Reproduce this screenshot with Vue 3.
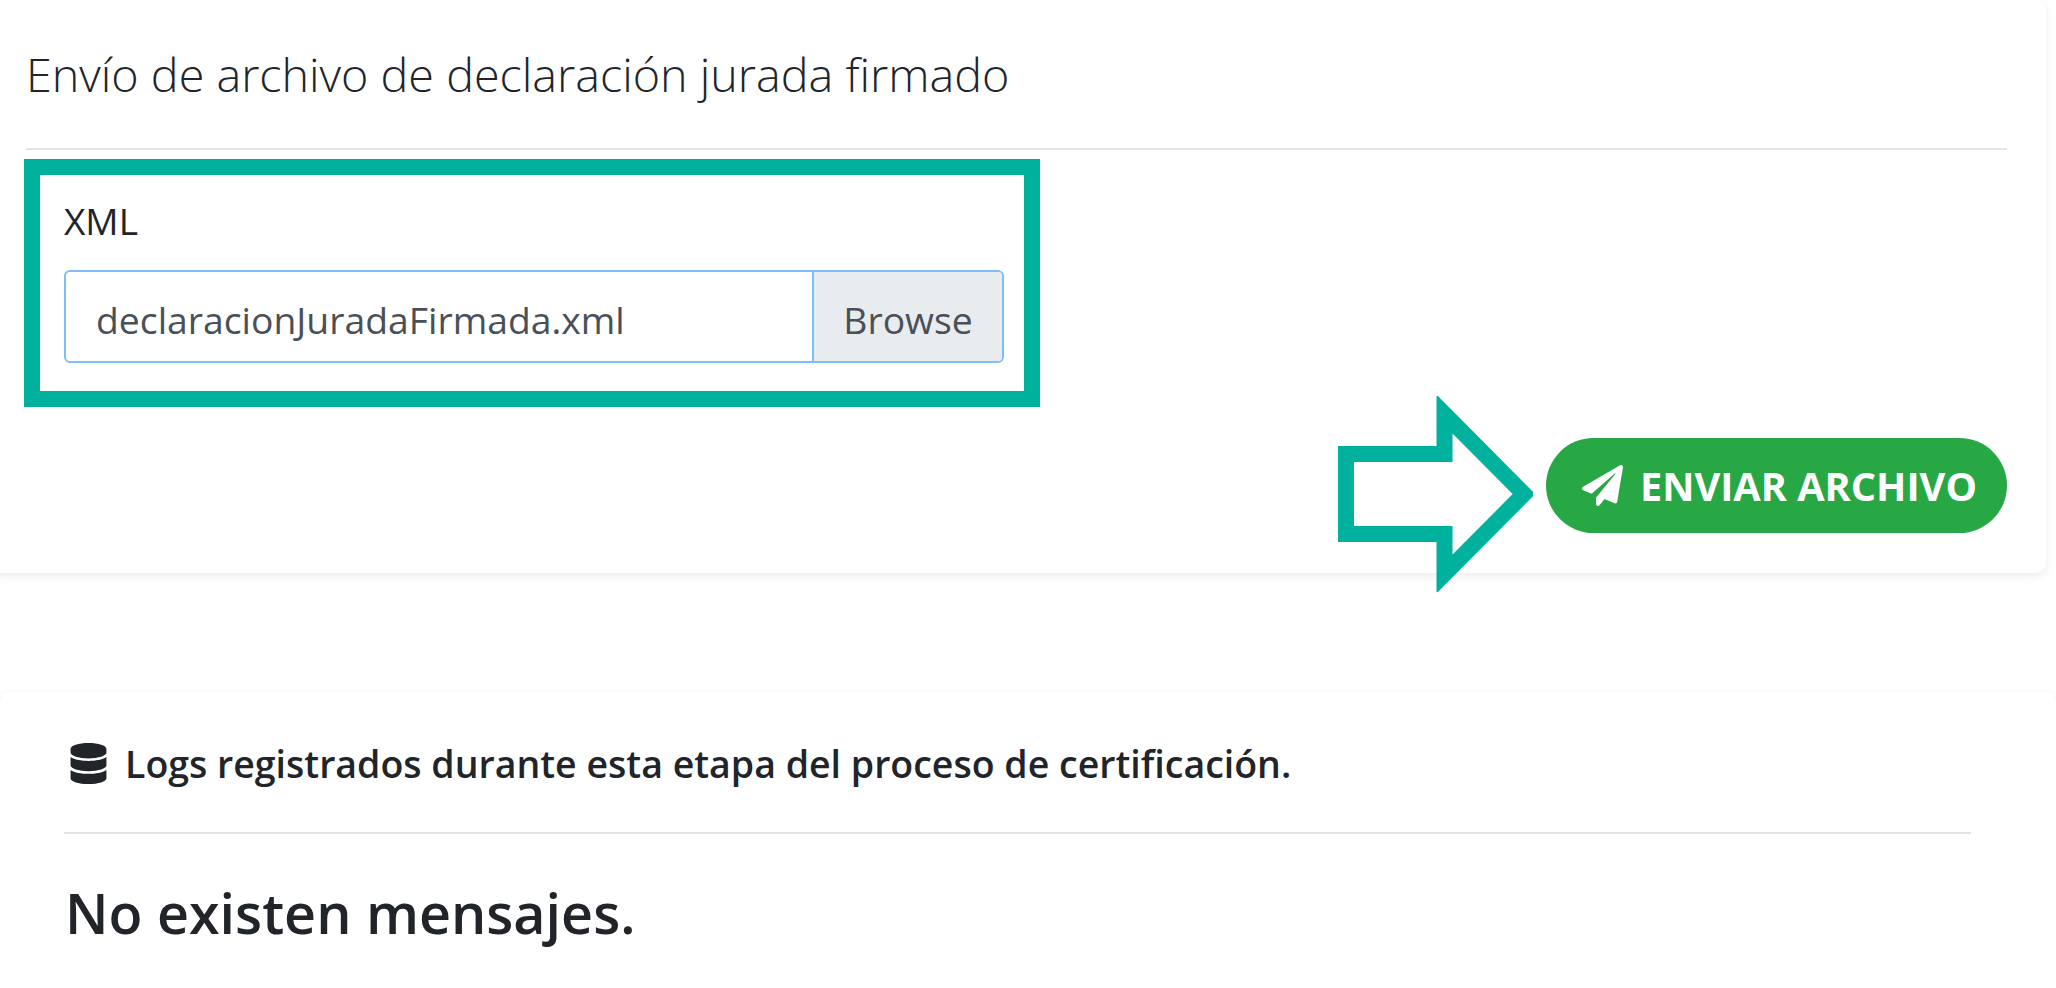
<script setup>
const fileName = 'declaracionJuradaFirmada.xml'
</script>

<template>
  <main class="page">
    <section class="card upload">
      <h2 class="title">Envío de archivo de declaración jurada firmado</h2>
      <hr class="rule" />
      <div class="mark">
        <label class="label">XML</label>
        <div class="file">
          <span class="file-name">{{ fileName }}</span>
          <span class="browse">Browse</span>
        </div>
      </div>
      <div class="actions">
        <button class="send">
          <svg class="plane" viewBox="0 0 512 512">
            <path fill="currentColor" d="M476 3.2L12.5 270.6c-18.1 10.4-15.8 35.6 2.2 43.2L121 358.4l287.3-253.2c5.5-4.9 13.3 2.6 8.6 8.3L176 407v80.5c0 23.6 28.5 32.9 42.5 15.8L282 426l124.6 52.2c14.2 6 30.4-2.9 33-18.2l72-432C515 7.8 493.3-6.8 476 3.2z" />
          </svg>
          ENVIAR ARCHIVO
        </button>
      </div>
      <svg class="arrow" viewBox="0 0 195 196">
        <path d="M8 58H106.500V18L186 98L106.500 178V138H8Z" fill="none" stroke="#00b19d" stroke-width="16" />
      </svg>
    </section>

    <section class="card logs">
      <p class="logs-head">
        <svg class="db" viewBox="0 0 448 512">
          <path fill="currentColor" d="M448 73.100v45.700C448 159.100 347.700 192 224 192S0 159.100 0 118.900V73.100C0 32.900 100.300 0 224 0s224 32.900 224 73.100zM448 176v102.900C448 319.100 347.700 352 224 352S0 319.100 0 278.900V176c48.100 33.100 136.200 48.600 224 48.600S399.900 209.100 448 176zm0 160v102.900C448 479.100 347.700 512 224 512S0 479.100 0 438.900V336c48.100 33.100 136.200 48.600 224 48.600S399.900 369.100 448 336z" />
        </svg>
        Logs registrados durante esta etapa del proceso de certificación.
      </p>
      <hr class="rule" />
      <h3 class="empty">No existen mensajes.</h3>
    </section>
  </main>
</template>

<style scoped>
.page {
  width: 2056px;
  height: 988px;
  overflow: hidden;
  background: #fff;
  color: #212529;
  font-family: "Open Sans", "Noto Sans", sans-serif;
}

.card {
  background: #fff;
  border-radius: 10px;
  box-shadow: 0 3px 10px rgba(0, 0, 0, 0.08);
}

.upload {
  position: relative;
  width: 2060px;
  height: 573px;
  margin-left: -14px;
  padding: 0 39px 0 40px;
  box-sizing: border-box;
}

.title {
  height: 148px;
  margin: 0;
  padding-top: 43px;
  box-sizing: border-box;
  font-size: 46.700px;
  font-weight: 300;
  line-height: 62px;
  white-space: nowrap;
}

.rule {
  margin: 0;
  border: 0;
  border-top: 2px solid #e4e4e4;
}

.mark {
  width: 1016px;
  height: 248px;
  margin: 9px 0 0 -2px;
  padding: 26px 20px 0 24px;
  box-sizing: border-box;
  border: 16px solid #00b19d;
}

.label {
  display: block;
  font-size: 37px;
  line-height: 40px;
}

.file {
  display: flex;
  height: 93px;
  margin-top: 29px;
  box-sizing: border-box;
  border: 2px solid #80bdff;
  border-radius: 6px;
  overflow: hidden;
  font-size: 37.300px;
  color: #495057;
}

.file-name {
  flex: 1;
  padding-left: 30px;
  padding-top: 5px;
  line-height: 85px;
}

.browse {
  width: 190px;
  padding-top: 5px;
  box-sizing: border-box;
  border-left: 2px solid #80bdff;
  background: #e9ecef;
  text-align: center;
  line-height: 85px;
}

.actions {
  display: flex;
  justify-content: flex-end;
  margin-top: 31px;
}

.send {
  display: flex;
  align-items: center;
  gap: 17px;
  height: 95px;
  padding: 0 30px 0 36px;
  border: 0;
  border-radius: 48px;
  background: #28a745;
  color: #fff;
  font-family: inherit;
  font-size: 39.700px;
  font-weight: 700;
  white-space: nowrap;
}

.plane {
  width: 41px;
  height: 41px;
}

.arrow {
  position: absolute;
  left: 1352px;
  top: 396px;
  width: 195px;
  height: 196px;
}

.logs {
  height: 400px;
  margin-top: 119px;
  padding: 52px 85px 0 64px;
  box-sizing: border-box;
}

.logs-head {
  display: flex;
  align-items: center;
  gap: 18px;
  height: 88px;
  margin: 0;
  padding-bottom: 49px;
  box-sizing: border-box;
  font-size: 37.500px;
  font-weight: 600;
  white-space: nowrap;
}

.db {
  width: 37px;
  height: 41px;
  margin-left: 6px;
}

.empty {
  margin: 44px 0 0 1px;
  font-size: 55.600px;
  font-weight: 600;
  line-height: 70px;
}
</style>

<style>
html,
body {
  margin: 0;
  background: #fff;
}
</style>
